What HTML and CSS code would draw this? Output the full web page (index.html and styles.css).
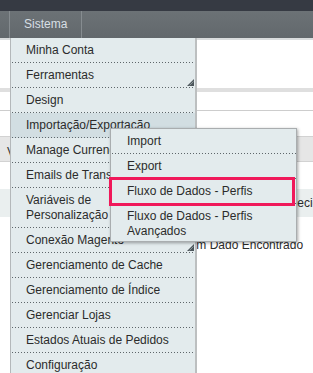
FILE: index.html
```html
<!DOCTYPE html>
<html lang="pt-BR">
<head>
<meta charset="utf-8">
<title>Sistema</title>
<link rel="stylesheet" href="styles.css">
</head>
<body>
<header class="topbar"></header>
<nav class="navbar">
  <div class="tab">Sistema</div>
</nav>
<main class="content">
  <div class="gap g1"></div>
  <div class="greybar"></div>
  <div class="gap g2"></div>
  <div class="rule"></div>
  <div class="gap g3"></div>
  <div class="thead">Visualizar</div>
  <div class="gap g4"></div>
  <div class="filter"><span class="filter-text">Selecionar</span></div>
  <div class="empty">Nenhum Dado Encontrado</div>
</main>

<ul class="dropdown">
  <li>Minha Conta</li>
  <li class="has-sub">Ferramentas<svg class="grip" width="7" height="7" viewBox="0 0 7 7"><polygon points="7,0 7,7 0,7" fill="#4d575c"/><line x1="2.5" y1="6.5" x2="6.5" y2="2.5" stroke="#9aa4a8" stroke-width="0.8"/></svg></li>
  <li>Design</li>
  <li class="active">Importação/Exportação</li>
  <li>Manage Currency Rates</li>
  <li>Emails de Transação</li>
  <li>Variáveis de<br>Personalização</li>
  <li class="has-sub">Conexão Magento<svg class="grip" width="7" height="7" viewBox="0 0 7 7"><polygon points="7,0 7,7 0,7" fill="#4d575c"/><line x1="2.5" y1="6.5" x2="6.5" y2="2.5" stroke="#9aa4a8" stroke-width="0.8"/></svg></li>
  <li>Gerenciamento de Cache</li>
  <li>Gerenciamento de Índice</li>
  <li>Gerenciar Lojas</li>
  <li>Estados Atuais de Pedidos</li>
  <li>Configuração</li>
</ul>

<ul class="submenu">
  <li>Import</li>
  <li>Export</li>
  <li class="marked">Fluxo de Dados - Perfis</li>
  <li class="last">Fluxo de Dados - Perfis<br>Avançados</li>
</ul>
</body>
</html>
```
FILE: styles.css
```css
* { box-sizing: border-box; }
html, body { margin: 0; padding: 0; }
body {
  width: 313px;
  height: 373px;
  overflow: hidden;
  background: #fff;
  font-family: "Liberation Sans", Arial, sans-serif;
  font-size: 12px;
  color: #2b2b2b;
  position: relative;
}
.topbar { height: 11px; background: #363a43; }
.navbar {
  height: 27px;
  background: linear-gradient(#6c7276, #62686c);
  display: flex;
  padding-left: 9px;
}
.tab {
  width: 73px;
  height: 27px;
  border-left: 1px solid #868c90;
  border-right: 1px solid #868c90;
  color: #d7dfe4;
  line-height: 26px;
  padding-left: 14px;
  font-size: 12px;
}
.content { display: flex; flex-direction: column; }
.content::before {
  content: "";
  height: 2px;
  background: #d9dcdd;
}
.gap.g1 { height: 48px; }
.greybar { height: 4px; background: #dfdfdf; }
.gap.g2 { height: 18px; }
.rule { height: 1px; background: #cdcdcd; }
.gap.g3 { height: 25px; }
.thead {
  height: 26px;
  background: #e6e6e6;
  border-top: 1px solid #d2d2d2;
  border-bottom: 1px solid #d2d2d2;
  padding-top: 6px;
  line-height: 18px;
  padding-left: 7px;
  color: #333;
}
.gap.g4 { height: 27px; }
.filter {
  height: 28px;
  background: #eaefef;
  line-height: 28px;
  padding-left: 280px;
  white-space: nowrap;
}
.empty {
  padding-left: 161px;
  margin-top: 21px;
  line-height: 15px;
  white-space: nowrap;
}

ul { list-style: none; margin: 0; padding: 0; }
.dropdown {
  position: absolute;
  left: 10px;
  top: 38px;
  width: 187px;
  background: #e3ebed;
  border-left: 1px solid #b4b8ba;
  border-right: 2px solid #bcbfc0;
}
.dropdown li, .submenu li {
  position: relative;
  line-height: 15px;
  padding: 5px 8px 5px 15px;
  background-image: linear-gradient(to right, #5e666a 1px, transparent 1px);
  background-size: 3px 1px;
  background-repeat: repeat-x;
  background-position: 1px 100%;
  white-space: nowrap;
}
.dropdown li.active { background-color: #d2dee2; }
.grip { position: absolute; right: 1px; bottom: 2px; }

.submenu {
  position: absolute;
  left: 110px;
  top: 128px;
  width: 187px;
  background: #e3ebed;
  border: 1px solid #a9adaf;
  box-shadow: 1px 1px 3px rgba(0,0,0,0.35);
}
.submenu li { padding-left: 16px; }
.submenu li.last { background-image: none; padding-bottom: 2px; }
.submenu li.marked::after {
  content: "";
  position: absolute;
  left: -2px;
  top: -2px;
  right: 1px;
  bottom: -2px;
  border: 3px solid #f0185a;
}
```
